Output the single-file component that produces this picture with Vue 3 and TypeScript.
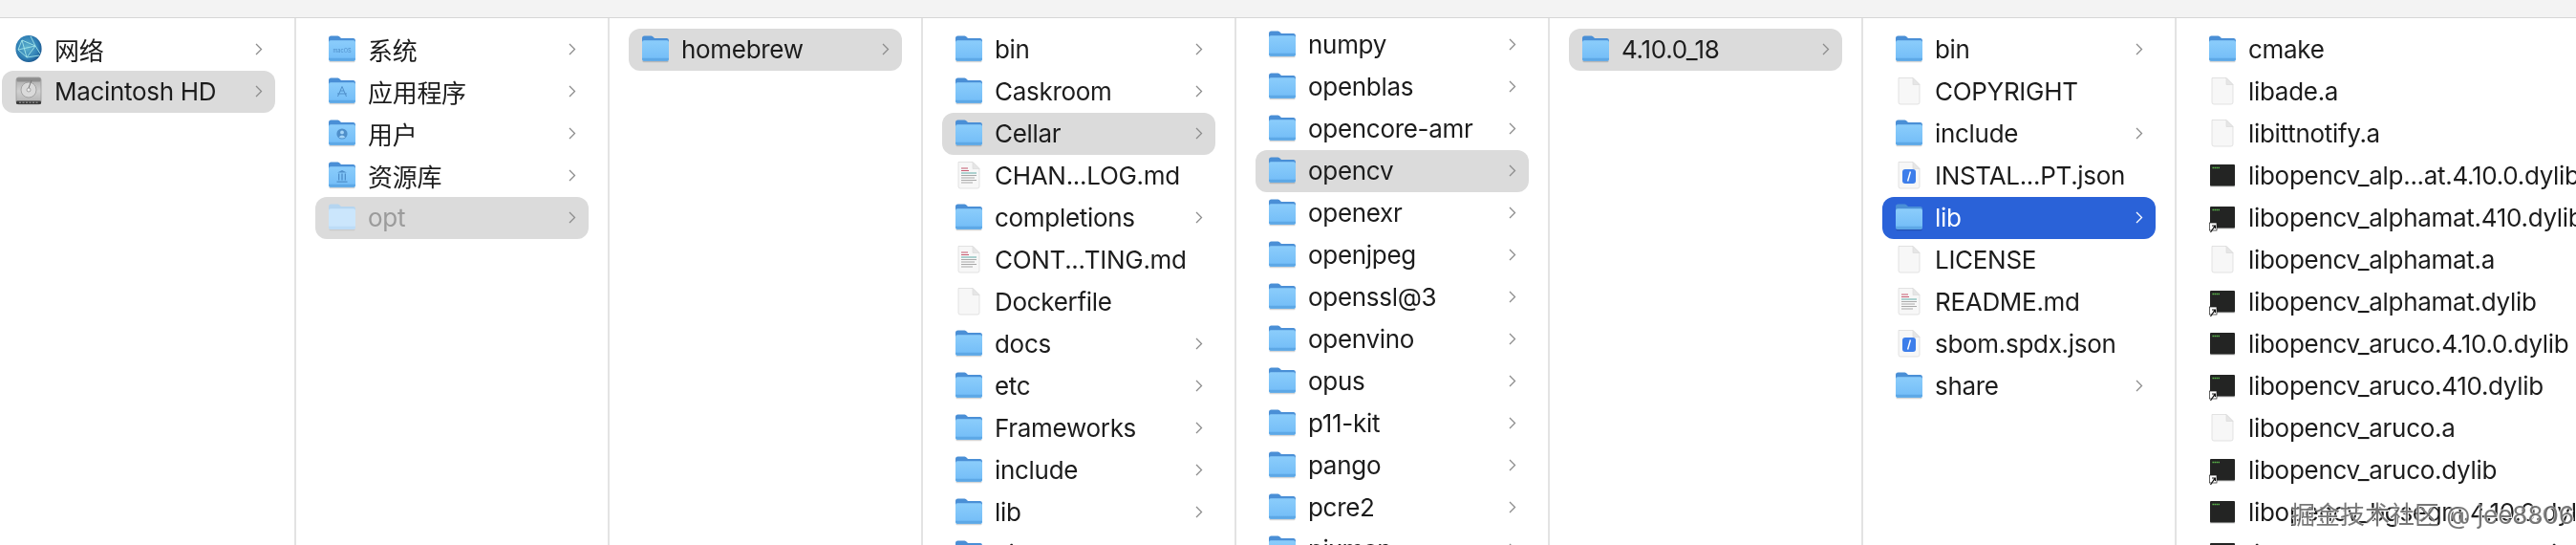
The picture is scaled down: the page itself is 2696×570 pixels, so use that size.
<script setup lang="ts">
interface Item { name: string; icon: string; more?: boolean; state?: string }
interface Column { key: string; width: string; items: Item[] }

const f = (name: string, state?: string, icon = 'folder'): Item => ({ name, icon, more: true, state })
const d = (name: string, icon = 'doc'): Item => ({ name, icon })

const columns: Column[] = [
  { key: 'first', width: 'first', items: [
    { name: '网络', icon: 'globe', more: true },
    { name: 'Macintosh HD', icon: 'hd', more: true, state: 'gray' },
  ] },
  { key: 'root', width: 'std', items: [
    f('系统', undefined, 'f-macos'), f('应用程序', undefined, 'f-app'), f('用户', undefined, 'f-user'),
    f('资源库', undefined, 'f-lib'), f('opt', 'gray dim', 'f-dim'),
  ] },
  { key: 'opt', width: 'std', items: [f('homebrew', 'gray')] },
  { key: 'brew', width: 'std', items: [
    f('bin'), f('Caskroom'), f('Cellar', 'gray'), d('CHAN...LOG.md', 'md'), f('completions'), d('CONT...TING.md', 'md'),
    d('Dockerfile'), f('docs'), f('etc'), f('Frameworks'), f('include'), f('lib'), f('Library'),
  ] },
  { key: 'cellar', width: 'scrolled', items: [
    f('numpy'), f('openblas'), f('opencore-amr'), f('opencv', 'gray'), f('openexr'), f('openjpeg'), f('openssl@3'),
    f('openvino'), f('opus'), f('p11-kit'), f('pango'), f('pcre2'), f('pixman'),
  ] },
  { key: 'ver', width: 'std', items: [f('4.10.0_18', 'gray')] },
  { key: 'cv', width: 'std', items: [
    f('bin'), d('COPYRIGHT'), f('include'), d('INSTAL...PT.json', 'json'), f('lib', 'blue'), d('LICENSE'),
    d('README.md', 'md'), d('sbom.spdx.json', 'json'), f('share'),
  ] },
  { key: 'libs', width: 'last', items: [
    { name: 'cmake', icon: 'folder' }, d('libade.a'), d('libittnotify.a'),
    d('libopencv_alp...at.4.10.0.dylib', 'exec'), d('libopencv_alphamat.410.dylib', 'alias'), d('libopencv_alphamat.a'),
    d('libopencv_alphamat.dylib', 'alias'), d('libopencv_aruco.4.10.0.dylib', 'exec'), d('libopencv_aruco.410.dylib', 'alias'),
    d('libopencv_aruco.a'), d('libopencv_aruco.dylib', 'alias'), d('libopencv_bgsegm.4.10.0.dylib', 'exec'),
    d('libopencv_bgsegm.410.dylib', 'alias'),
  ] },
]
</script>

<template>
  <div class="finder">
    <svg class="sprite" aria-hidden="true">
      <defs>
        <linearGradient id="fbody" x1="0" y1="0" x2="0" y2="1">
          <stop offset="0" stop-color="#8bcdfb" />
          <stop offset="1" stop-color="#72bcf7" />
        </linearGradient>
        <radialGradient id="gball" cx="0.45" cy="0.45" r="0.6">
          <stop offset="0" stop-color="#5fb4cf" />
          <stop offset="0.7" stop-color="#2f7fb5" />
          <stop offset="1" stop-color="#174f86" />
        </radialGradient>
        <linearGradient id="hdbody" x1="0" y1="0" x2="0" y2="1">
          <stop offset="0" stop-color="#a8a8a8" />
          <stop offset="0.5" stop-color="#d0d0d0" />
          <stop offset="1" stop-color="#b0b0b0" />
        </linearGradient>
        <g id="folder">
          <rect x="0.5" y="27" width="27" height="2.2" rx="1" fill="#000" opacity="0.16" />
          <path d="M0 4Q0 1.5 2.5 1.5H9.5Q11 1.5 12 3L13 4H26Q28 4 28 6.5V12H0Z" fill="#4a8fd6" />
          <rect x="0" y="6.2" width="28" height="21.5" rx="2" fill="url(#fbody)" />
          <path d="M0 24.8H28V25.7Q28 27.7 26 27.7H2Q0 27.7 0 25.7Z" fill="#5da8e6" />
        </g>
        <g id="f-macos">
          <use href="#folder" />
          <text x="14" y="18.5" text-anchor="middle" class="glyph-text">macOS</text>
        </g>
        <g id="f-app">
          <use href="#folder" />
          <path d="M14 10.5L9.5 21M14 10.5L18.5 21M9 18H19M12 15H16" fill="none" stroke="#4f8fca" stroke-width="1" />
        </g>
        <g id="f-user">
          <use href="#folder" />
          <circle cx="14" cy="16" r="5.6" fill="#4f8fca" />
          <circle cx="14" cy="14.4" r="1.9" fill="#a5d5f8" />
          <path d="M10.6 19.4Q14 15.8 17.4 19.4Q14 21.6 10.6 19.4Z" fill="#a5d5f8" />
        </g>
        <g id="f-lib">
          <use href="#folder" />
          <path d="M9 12.5L14 10L19 12.5ZM8.5 21.5H19.5V22.7H8.5ZM10 13.5H11.3V20.5H10ZM13.3 13.5H14.7V20.5H13.3ZM16.7 13.5H18V20.5H16.7Z" fill="#4f8fca" />
        </g>
        <g id="f-dim">
          <rect x="0.5" y="27" width="27" height="2.2" rx="1" fill="#000" opacity="0.07" />
          <path d="M0 4Q0 1.5 2.5 1.5H9.5Q11 1.5 12 3L13 4H26Q28 4 28 6.5V12H0Z" fill="#b5d5f0" />
          <rect x="0" y="6.2" width="28" height="21.5" rx="2" fill="#cbe6fc" />
          <path d="M0 24.8H28V25.7Q28 27.7 26 27.7H2Q0 27.7 0 25.7Z" fill="#bcdcf7" />
        </g>
        <g id="doc">
          <path d="M3 1.5H18L25 8.5V27Q25 29 23 29H5Q3 29 3 27Z" fill="#f7f7f7" stroke="#dcdcdc" stroke-width="0.8" />
          <path d="M18 1.5V8.5H25Z" fill="#e6e6e6" stroke="#d8d8d8" stroke-width="0.6" />
        </g>
        <g id="md">
          <use href="#doc" />
          <path d="M6 8H13M6 10.5H14" stroke="#c65a70" stroke-width="1.1" />
          <path d="M6 13H22" stroke="#6fb3b0" stroke-width="1.1" />
          <path d="M6 15.5H22M6 18H20M6 20.5H22M6 23H18" stroke="#a9a9a9" stroke-width="1.1" />
        </g>
        <g id="json">
          <use href="#doc" />
          <rect x="7" y="9" width="14" height="15" rx="3" fill="#3d7eea" />
          <path d="M15.4 11.5L12.6 21.5" stroke="#fff" stroke-width="1.4" />
        </g>
        <g id="exec">
          <rect x="1" y="5.5" width="26" height="22" fill="#000" opacity="0.18" />
          <rect x="1" y="4" width="26" height="22.5" rx="1" fill="#232423" />
          <path d="M3.5 7.5H11" stroke="#5fc24e" stroke-width="1.4" stroke-dasharray="1.4 0.6" />
        </g>
        <g id="alias">
          <use href="#exec" />
          <rect x="0.5" y="21" width="7.5" height="8" fill="#fff" stroke="#222" stroke-width="0.7" />
          <path d="M1.5 31L6 24.4M3 24H6.4V27" fill="none" stroke="#111" stroke-width="1.2" />
        </g>
        <g id="globe">
          <ellipse cx="14" cy="15" rx="13.6" ry="14" fill="url(#gball)" />
          <path d="M7 6L21 12L12 24L7 6M21 12L26 20M12 24L3 16L7 6M21 12L16 2M3 16L21 12M12 24L25 22" fill="none" stroke="#a4e6ea" stroke-width="0.9" />
        </g>
        <g id="hd">
          <rect x="1" y="1" width="26" height="28" rx="2.5" fill="url(#hdbody)" stroke="#8a8a8a" stroke-width="0.6" />
          <rect x="1.5" y="1.5" width="25" height="4" rx="1.5" fill="#8d8d8d" />
          <circle cx="14" cy="14" r="8" fill="#dadada" stroke="#8f8f8f" stroke-width="0.7" />
          <circle cx="14" cy="14" r="2" fill="#eeeeee" stroke="#8a8a8a" stroke-width="0.7" />
          <path d="M17 4L14 12" stroke="#777" stroke-width="1" />
          <rect x="1" y="25.5" width="26" height="3.5" rx="1.2" fill="#3c3c3c" />
          <path d="M4 27.2H24" stroke="#a5a5a5" stroke-width="1" stroke-dasharray="2 1.5" />
        </g>
      </defs>
    </svg>

    <header class="toolbar"></header>

    <main class="browser">
      <section v-for="col in columns" :key="col.key" class="column" :class="col.width">
        <div v-for="item in col.items" :key="item.name" class="row" :class="item.state">
          <svg class="icon" viewBox="0 0 28 30"><use :href="'#' + item.icon" /></svg>
          <span class="label">{{ item.name }}</span>
          <svg v-if="item.more" class="chevron" viewBox="0 0 8 13">
            <path d="M1 1L6.5 6.5L1 12" />
          </svg>
        </div>
      </section>
    </main>

    <div class="watermark">掘金技术社区 @ jee8806</div>
  </div>
</template>

<style>
html, body { margin: 0; background: #fff; }
.glyph-text { font: 5.6px "Inter", sans-serif; fill: #4f8fca; }
</style>

<style scoped>
.finder {
  position: relative;
  width: 2696px;
  height: 570px;
  overflow: hidden;
  background: #fff;
  color: #1c1c1c;
  font-family: "Inter", "Noto Sans CJK SC", sans-serif;
  font-size: 26px;
  filter: blur(0.45px);
}
.sprite { position: absolute; width: 0; height: 0; }
.toolbar {
  height: 18px;
  background: #f3f3f3;
  border-bottom: 1px solid #d6d6d6;
}
.browser { display: flex; height: 551px; overflow: hidden; }
.column {
  flex: none;
  box-sizing: border-box;
  width: 328px;
  padding: 11px 20px 0;
  border-right: 2px solid #e3e3e3;
  overflow: hidden;
}
.column.first { width: 310px; padding-left: 2px; }
.column.scrolled { padding-top: 6px; }
.column.last { flex: 1; padding-right: 0; border-right: 0; }
.row {
  display: flex;
  align-items: center;
  box-sizing: border-box;
  height: 44px;
  padding: 0 13px 2px 14px;
  border-radius: 12px;
  white-space: nowrap;
}
.row.gray { background: #dbdbdb; }
.row.blue { background: #2a62d8; color: #fff; }
.row.dim { color: #9b9b9b; }
.icon { flex: none; width: 28px; height: 30px; overflow: visible; }
.label { margin-left: 13px; letter-spacing: -0.3px; }
.chevron {
  flex: none;
  width: 8px;
  height: 13px;
  margin-left: auto;
  fill: none;
  stroke: #8c8c8c;
  stroke-width: 1.3;
}
.row.blue .chevron { stroke: #fff; }
.watermark {
  position: absolute;
  left: 2397px;
  top: 524px;
  font-size: 26px;
  line-height: 30px;
  white-space: nowrap;
  color: rgba(95, 95, 95, 0.85);
  text-shadow: 1px 1px 0 rgba(255, 255, 255, 0.9), -1px -1px 0 rgba(255, 255, 255, 0.6);
}
</style>
